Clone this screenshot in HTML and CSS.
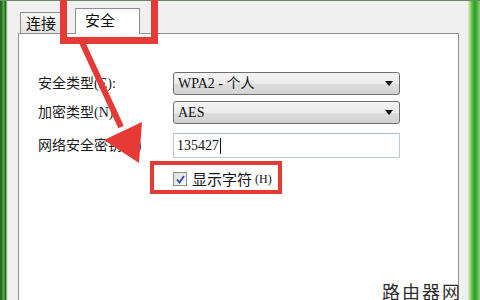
FILE: index.html
```html
<!DOCTYPE html>
<html lang="zh-CN">
<head>
<meta charset="utf-8">
<title>无线网络属性</title>
<link rel="stylesheet" href="styles.css">
</head>
<body>
<div class="window">
  <div class="frame-left"></div>
  <div class="client">
    <div class="tabs">
      <div class="tab">连接</div>
      <div class="tab tab-active">安全</div>
    </div>
    <div class="panel">
      <div class="row">
        <span class="label">安全类型(E):</span>
        <div class="select">WPA2 - 个人<span class="caret"></span></div>
      </div>
      <div class="row row-2">
        <span class="label">加密类型(N):</span>
        <div class="select">AES<span class="caret"></span></div>
      </div>
      <div class="row row-3">
        <span class="label">网络安全密钥(K)</span>
        <div class="input">135427<span class="cursor"></span></div>
      </div>
      <div class="check-row">
        <span class="checkbox">
          <svg width="9" height="9" viewBox="0 0 9 9"><path d="M1 4.5 L3.5 7.5 L8 1" fill="none" stroke="#2b4f9e" stroke-width="1.8"/></svg>
        </span>
        <span class="check-text">显示字符</span><span class="hotkey">(H)</span>
      </div>
    </div>
  </div>
  <div class="frame-right"></div>
</div>
<div class="mark mark-tab"></div>
<div class="mark mark-check"></div>
<svg class="arrow" width="480" height="300" viewBox="0 0 480 300">
  <line x1="81" y1="40" x2="121" y2="127" stroke="#e53a35" stroke-width="6"/>
  <polygon points="104,140 142,122 139,163" fill="#e53a35"/>
</svg>
<div class="watermark">路由器网</div>
</body>
</html>
```
FILE: styles.css
```css
html, body {
  margin: 0;
  padding: 0;
}
body {
  width: 480px;
  height: 300px;
  overflow: hidden;
  position: relative;
  font-family: "Liberation Serif", "Noto Sans CJK SC", serif;
  color: #111;
  background: #f0f0f0;
}
.window {
  display: flex;
  height: 300px;
  border-top: 1px solid #6c8a64;
  box-sizing: border-box;
}
.frame-left {
  width: 8px;
  background: linear-gradient(to right, #1e5c1e 0, #2f7d2c 25%, #5cae4c 45%, #1f641f 70%, #c9d9c4 88%, #e9eee8 100%);
}
.frame-right {
  width: 12px;
  background: linear-gradient(to right, #e6ece3 0, #a6d884 15%, #5cbf3f 35%, #2f9a2a 55%, #48b040 75%, #8fd070 100%);
}
.client {
  flex: 1;
  display: flex;
  flex-direction: column;
  padding: 0 9px 0 10px;
  background: #f0f0f0;
}
.tabs {
  height: 32px;
  display: flex;
  align-items: flex-end;
  padding-left: 2px;
}
.tab {
  box-sizing: border-box;
  width: 42px;
  height: 21px;
  border: 1px solid #8c8e94;
  border-bottom: none;
  background: linear-gradient(#f5f5f5, #e4e4e4);
  font-family: "Noto Sans CJK SC", sans-serif;
  font-size: 15px;
  line-height: 20px;
  text-align: center;
}
.tab-active {
  width: 65px;
  height: 26px;
  margin-left: 13px;
  margin-bottom: -1px;
  background: #fff;
  position: relative;
  z-index: 1;
  line-height: 22px;
  text-align: left;
  padding-left: 9px;
}
.panel {
  flex: 1;
  background: #fff;
  border: 1px solid #8e9096;
  border-bottom: none;
  padding: 38px 0 0 19px;
}
.row {
  display: flex;
  align-items: center;
  height: 23px;
}
.row-2 {
  margin-top: 6px;
}
.row-3 {
  margin-top: 9px;
  height: 25px;
}
.label {
  width: 135px;
  font-size: 14px;
  line-height: 18px;
  color: #1a1a1a;
}
.select {
  box-sizing: border-box;
  width: 227px;
  height: 23px;
  border: 1px solid #6f6f6f;
  border-radius: 3px;
  background: linear-gradient(#f3f3f3 0, #ececec 50%, #dedede 51%, #d2d2d2 100%);
  font-size: 14px;
  line-height: 21px;
  padding-left: 4px;
  display: flex;
  justify-content: space-between;
  align-items: center;
}
.caret {
  width: 0;
  height: 0;
  border-left: 4px solid transparent;
  border-right: 4px solid transparent;
  border-top: 5px solid #111;
  margin-right: 6px;
}
.input {
  box-sizing: border-box;
  width: 227px;
  height: 25px;
  border: 1px solid #b7cbdd;
  border-top-color: #a3bdd4;
  background: #fff;
  font-size: 14px;
  line-height: 23px;
  padding-left: 3px;
  display: flex;
  align-items: center;
}
.cursor {
  display: inline-block;
  width: 1px;
  height: 16px;
  background: #111;
  margin-left: 1px;
}
.check-row {
  margin-top: 12px;
  margin-left: 135px;
  height: 18px;
  display: flex;
  align-items: center;
}
.checkbox {
  box-sizing: border-box;
  width: 14px;
  height: 14px;
  border: 1px solid #8e8f8f;
  background: linear-gradient(135deg, #dcdcdc, #f7f7f7);
  display: flex;
  align-items: center;
  justify-content: center;
}
.check-text {
  margin-left: 5px;
  font-family: "Noto Sans CJK SC", sans-serif;
  font-size: 15px;
  line-height: 18px;
}
.hotkey {
  margin-left: 3px;
  font-size: 12px;
  line-height: 18px;
}
.mark {
  position: absolute;
  box-sizing: border-box;
  border-style: solid;
  border-color: #e53a35;
}
.mark-tab {
  left: 60px;
  top: -10px;
  width: 98px;
  height: 54px;
  border-width: 7px;
}
.mark-check {
  left: 150px;
  top: 161px;
  width: 132px;
  height: 33px;
  border-width: 4px;
}
.arrow {
  position: absolute;
  left: 0;
  top: 0;
}
.watermark {
  position: absolute;
  left: 382px;
  top: 279px;
  font-family: "Noto Sans CJK SC", sans-serif;
  font-size: 18px;
  line-height: 24px;
  letter-spacing: 2px;
  color: #2b2b2b;
  text-shadow: 0 0 2px #fff;
}
```
